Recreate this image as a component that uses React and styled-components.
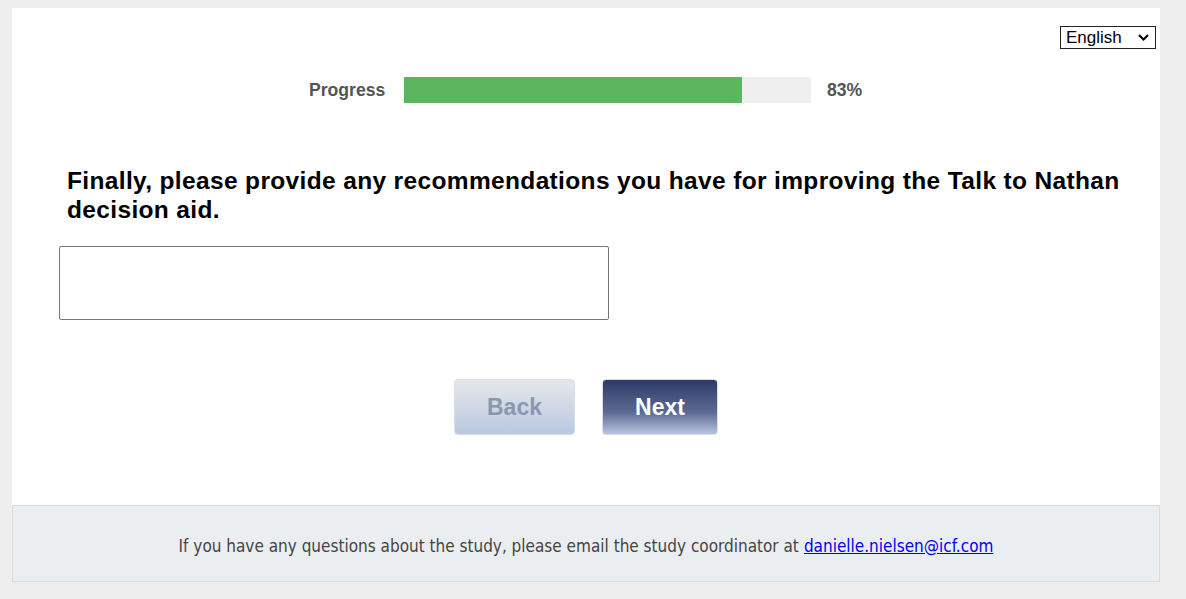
import React from "react";
import styled, { createGlobalStyle } from "styled-components";

const Global = createGlobalStyle`
  html, body {
    margin: 0;
    background: #eeeeee;
  }
  body {
    font-family: "Liberation Sans", Arial, sans-serif;
  }
`;

const Page = styled.div`
  padding: 8px 0 0 12px;
  width: 1148px;
`;

const Panel = styled.div`
  background: #fff;
  height: 497px;
  display: flex;
  flex-direction: column;
`;

const TopBar = styled.div`
  display: flex;
  justify-content: flex-end;
  padding: 18px 4px 0 0;
`;

const SelectWrap = styled.div`
  position: relative;
  width: 96px;
  height: 23px;
`;

const LangSelect = styled.select`
  appearance: none;
  font-family: "Liberation Sans", Arial, sans-serif;
  font-size: 17px;
  width: 96px;
  height: 23px;
  border: 1px solid #222;
  border-radius: 0;
  background: #fff;
  color: #000;
  padding: 0 0 0 5px;
`;

const Chevron = styled.svg`
  position: absolute;
  right: 7px;
  top: 8px;
  pointer-events: none;
`;

const ProgressRow = styled.div`
  display: flex;
  align-items: center;
  margin: 28px 0 0 297px;
  font-weight: bold;
  font-size: 17.6px;
  color: #555;
`;

const ProgressLabel = styled.span`
  width: 95px;
`;

const Track = styled.div`
  width: 407px;
  height: 26px;
  background: #efefef;
  margin-right: 16px;
`;

const Fill = styled.div`
  height: 100%;
  background: #5cb660;
`;

const Question = styled.h2`
  margin: 63px 30px 0 55px;
  font-size: 24.5px;
  letter-spacing: 0.35px;
  line-height: 29px;
  font-weight: bold;
  color: #000;
`;

const Answer = styled.textarea`
  display: block;
  margin: 22px 0 0 47px;
  width: 550px;
  height: 74px;
  box-sizing: border-box;
  border: 1px solid #767676;
  border-radius: 2px;
  resize: none;
  font-family: "Liberation Sans", Arial, sans-serif;
`;

const Buttons = styled.div`
  display: flex;
  justify-content: center;
  gap: 27px;
  margin: 59px 0 0 0;
`;

const NavButton = styled.button`
  width: ${(p) => p.$w}px;
  height: 56px;
  border: 1px solid #d8dde6;
  border-radius: 4px;
  font-family: "Liberation Sans", Arial, sans-serif;
  font-weight: bold;
  font-size: 23px;
  background: ${(p) =>
    p.$primary
      ? "linear-gradient(#2c3a68, #5d6b93 60%, #b7c3de)"
      : "linear-gradient(#e6e7ea, #b9c8e0)"};
  color: ${(p) => (p.$primary ? "#fff" : "#8a97b0")};
  cursor: pointer;
`;

const Footer = styled.div`
  background: #ebeef1;
  border: 1px solid #d9dcdf;
  display: flex;
  align-items: center;
  justify-content: center;
  padding-top: 4px;
  box-sizing: border-box;
  height: 77px;
  font-family: "DejaVu Sans Condensed", "DejaVu Sans", sans-serif;
  font-size: 17px;
  color: #444;
`;

const Mail = styled.a`
  color: #0000ee;
  margin-left: 5px;
`;

export default function App() {
  const pct = 83;
  return (
    <Page>
      <Global />
      <Panel>
        <TopBar>
          <SelectWrap>
            <LangSelect defaultValue="en">
              <option value="en">English</option>
            </LangSelect>
            <Chevron width="11" height="7" viewBox="0 0 11 7">
              <path d="M1 1l4.5 4.5L10 1" fill="none" stroke="#000" strokeWidth="2" />
            </Chevron>
          </SelectWrap>
        </TopBar>
        <ProgressRow>
          <ProgressLabel>Progress</ProgressLabel>
          <Track>
            <Fill style={{ width: `${pct}%` }} />
          </Track>
          <span>{pct}%</span>
        </ProgressRow>
        <Question>
          Finally, please provide any recommendations you have for improving the Talk to Nathan
          decision aid.
        </Question>
        <Answer />
        <Buttons>
          <NavButton $w={121}>Back</NavButton>
          <NavButton $w={116} $primary>
            Next
          </NavButton>
        </Buttons>
      </Panel>
      <Footer>
        If you have any questions about the study, please email the study coordinator at
        <Mail href="#">danielle.nielsen@icf.com</Mail>
      </Footer>
    </Page>
  );
}
